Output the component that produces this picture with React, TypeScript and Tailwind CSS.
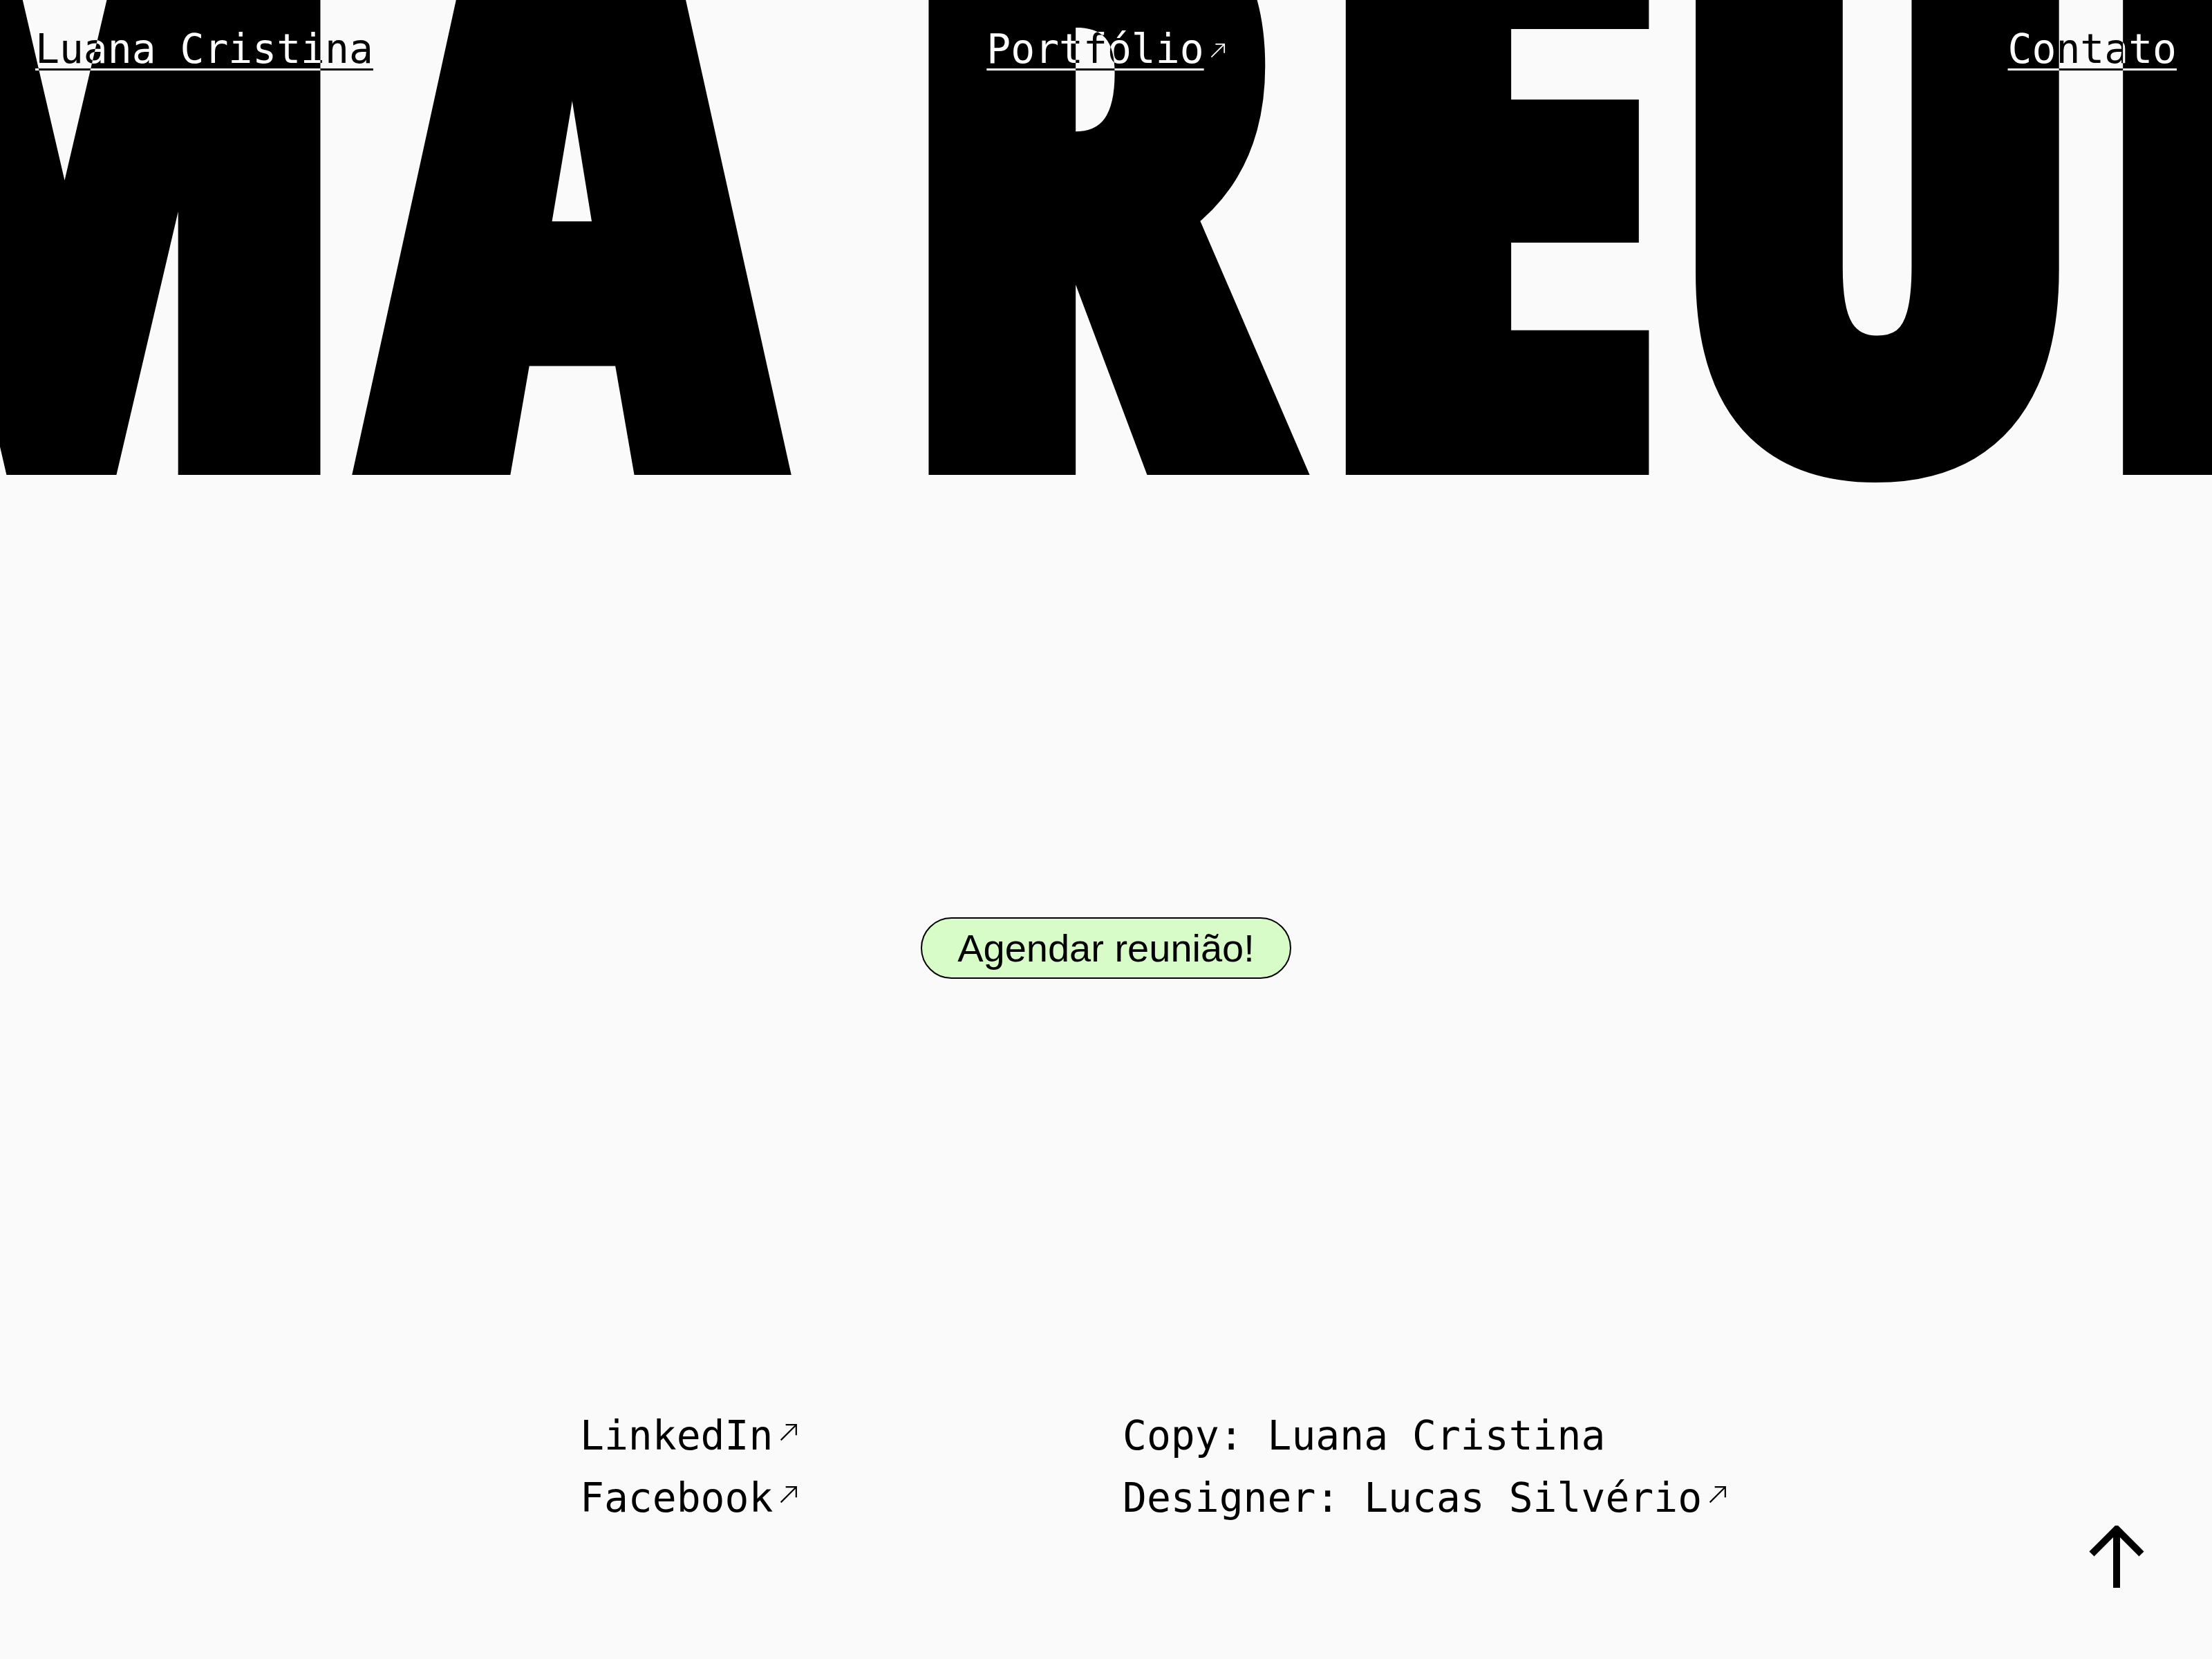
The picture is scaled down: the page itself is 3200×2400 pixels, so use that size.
import React from "react";

function ArrowNE({ className }: { className?: string }) {
  return (
    <svg viewBox="0 0 24 24" fill="none" stroke="currentColor" strokeWidth={2} className={className}>
      <path d="M1.5 22.5 22 2" />
      <path d="M8 2h14v14" />
    </svg>
  );
}

function ArrowUp() {
  return (
    <svg width="80" height="90" viewBox="0 0 80 90" fill="none" stroke="currentColor" strokeWidth={10} className="mt-[175px] shrink-0">
      <path d="M4 41 40 5l36 36" />
      <path d="M40 8v82" />
    </svg>
  );
}

export default function App() {
  return (
    <main className="relative flex h-[2400px] w-full flex-col overflow-hidden bg-[#fafafa] text-black">
      {/* Header — inverts over the big type */}
      <header className="absolute inset-x-0 top-0 z-10 grid grid-cols-3 px-[51px] pt-[42px] font-['DejaVu_Sans_Mono',monospace] text-[58px] leading-none text-white mix-blend-difference">
        <a href="#" className="justify-self-start underline decoration-3 underline-offset-[8px]">
          Luana Cristina
        </a>
        <a href="#" className="flex items-start gap-[9px] justify-self-center">
          <span className="underline decoration-3 underline-offset-[8px]">Portfólio</span>
          <ArrowNE className="mt-[20px] size-[22px]" />
        </a>
        <a href="#" className="justify-self-end underline decoration-3 underline-offset-[8px]">
          Contato
        </a>
      </header>

      {/* Marquee headline */}
      <section className="h-[710px] shrink-0 overflow-hidden">
        <div className="-mt-[340px] ml-[-948px] inline-block origin-left scale-x-[0.9] whitespace-nowrap font-['Open_Sans',sans-serif] text-[1132px] font-extrabold font-stretch-[75%] leading-none tracking-[34px] [word-spacing:-63px] [-webkit-text-stroke:44px_black]">
          UMA <span className="tracking-[48px]">R</span>
          <span className="inline-block origin-left scale-x-[1.125] tracking-[70px]">E</span>
          <span className="tracking-[18px]">U</span>NIÃO
        </div>
      </section>

      {/* CTA */}
      <section className="flex h-[1322px] shrink-0 items-center justify-center">
        <button className="rounded-full border-2 border-black bg-[#d8fcc8] px-[51px] py-[14px] font-['Liberation_Sans',Arial,sans-serif] text-[56px] leading-[57px] text-black">
          Agendar reunião!
        </button>
      </section>

      {/* Footer */}
      <footer className="flex items-start pl-[839px] pr-[98px] font-['DejaVu_Sans_Mono',monospace] text-[58px] leading-[90px]">
        <ul className="w-[785px] shrink-0">
          <li className="flex items-start gap-[10px]">
            LinkedIn
            <ArrowNE className="mt-[27px] size-[26px]" />
          </li>
          <li className="flex items-start gap-[10px]">
            Facebook
            <ArrowNE className="mt-[27px] size-[26px]" />
          </li>
        </ul>
        <ul className="flex-1">
          <li>Copy: Luana Cristina</li>
          <li className="flex items-start gap-[10px]">
            Designer: Lucas Silvério
            <ArrowNE className="mt-[27px] size-[26px]" />
          </li>
        </ul>
        <ArrowUp />
      </footer>
    </main>
  );
}
